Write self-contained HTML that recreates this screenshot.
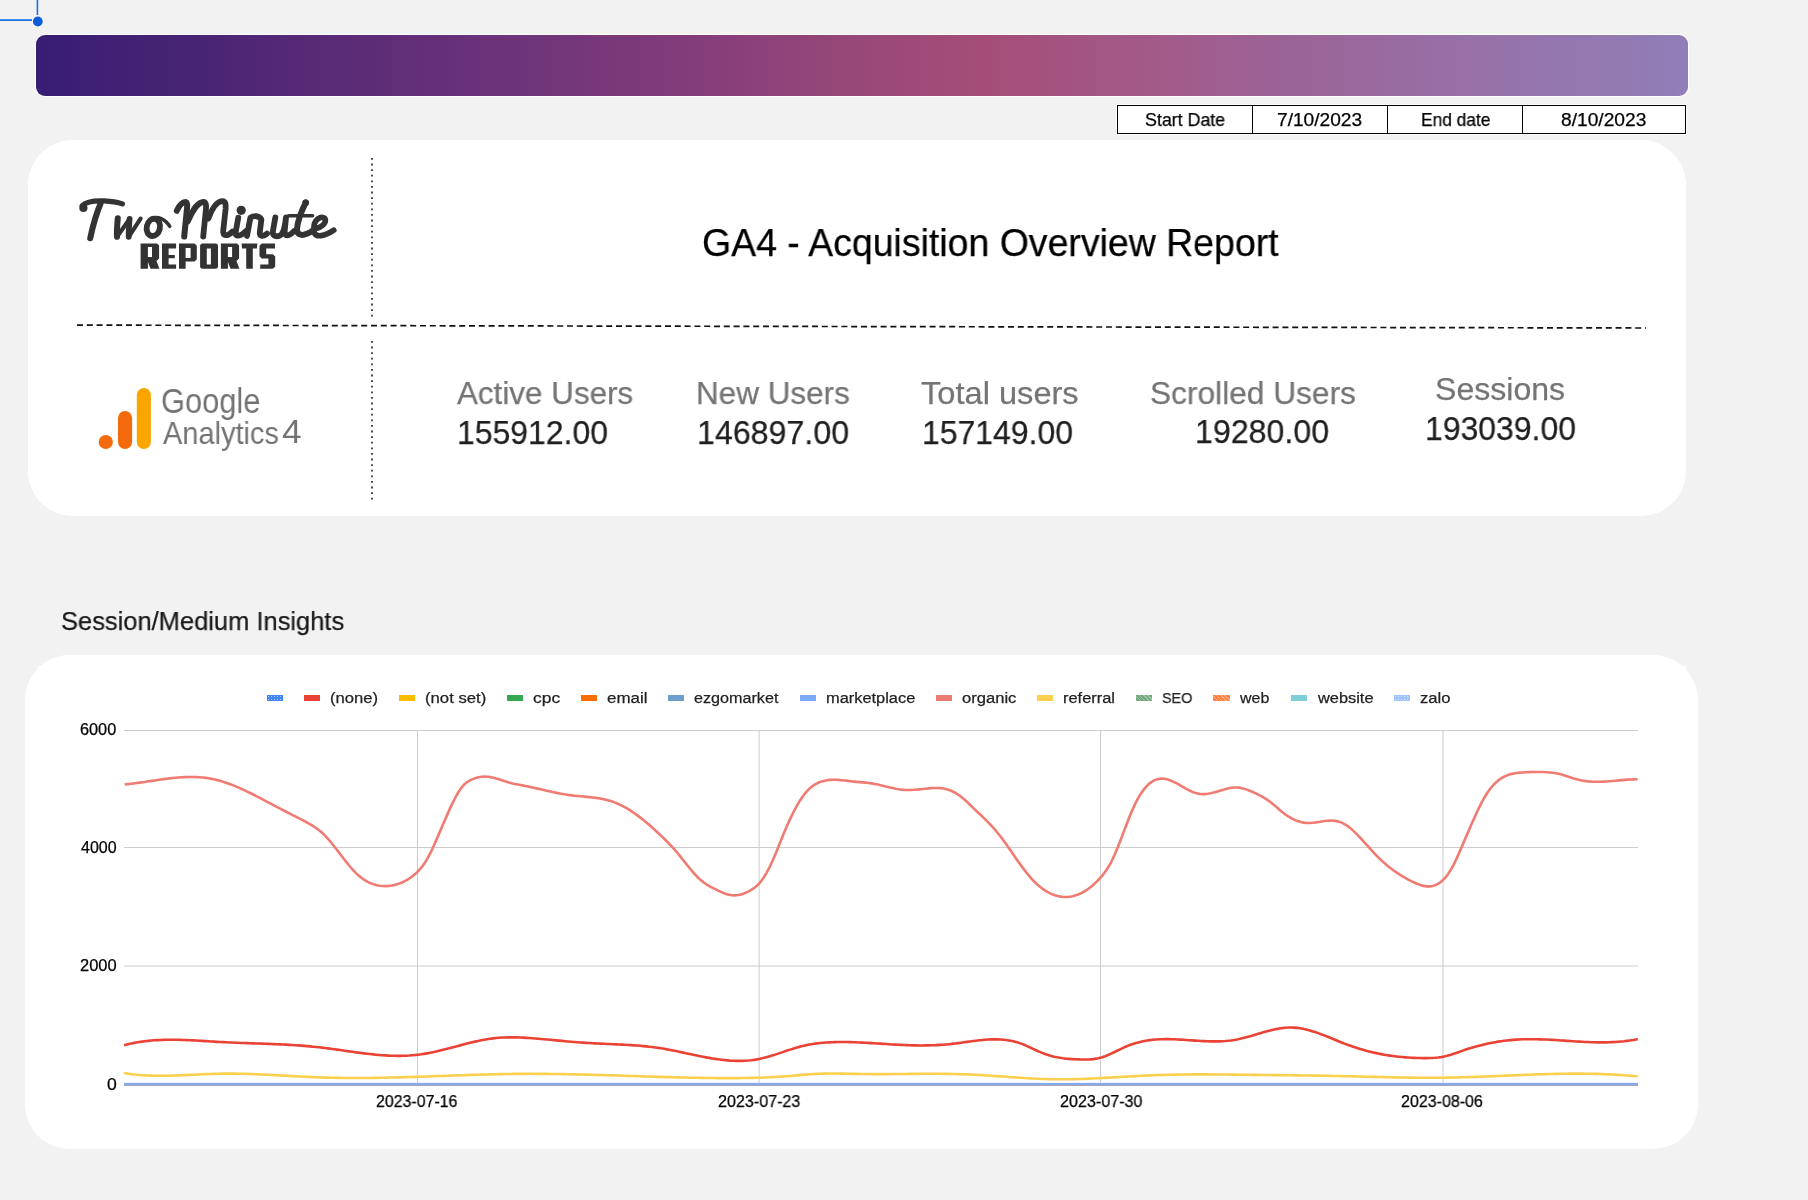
<!DOCTYPE html>
<html><head><meta charset="utf-8">
<style>
html,body{margin:0;padding:0;}
body{width:1808px;height:1200px;background:#f2f2f2;position:relative;overflow:hidden;font-family:"Liberation Sans",sans-serif;}
.abs{position:absolute;}
.t{position:absolute;white-space:pre;line-height:1;transform-origin:0 0;will-change:transform;-webkit-text-stroke:0.25px currentColor;}
.sw{position:absolute;top:695.3px;width:16.3px;height:5.5px;}
.card{position:absolute;background:#fff;border-radius:45px;}
</style></head>
<body>
<svg class="abs" style="left:0;top:0" width="60" height="40">
  <rect x="36.6" y="0" width="1.6" height="15" fill="#1a73e8"/>
  <rect x="0" y="19.2" width="32" height="1.8" fill="#1a73e8"/>
  <circle cx="37.8" cy="21.5" r="5.6" fill="#fff"/>
  <circle cx="37.8" cy="21.5" r="4.9" fill="#0b5ed7"/>
</svg>
<div class="abs" style="left:35px;top:34px;width:1654px;height:63px;border-radius:10px;background:#fff;"></div>
<div class="abs" style="left:36px;top:35px;width:1652px;height:61px;border-radius:9px;background:linear-gradient(90deg,#381d74 0%,#482474 9.6%,#5c2c77 19.3%,#6d337a 28.7%,#853d7a 40.5%,#984878 49.6%,#a54d78 57.4%,#a25a89 67.7%,#9a679b 78.9%,#9673aa 88.9%,#917eb8 100%);"></div>
<div class="abs" style="left:1116.8px;top:104.8px;width:567.5px;height:27.2px;border:1.35px solid #000;background:#fff;box-shadow:0 0 0 1px #fff;"></div>
<div class="abs" style="left:1251.6px;top:104.8px;width:1.35px;height:29.6px;background:#000"></div>
<div class="abs" style="left:1386.8px;top:104.8px;width:1.35px;height:29.6px;background:#000"></div>
<div class="abs" style="left:1521.8px;top:104.8px;width:1.35px;height:29.6px;background:#000"></div>
<div class="card" style="left:28px;top:140px;width:1658px;height:376px;"></div>
<svg class="abs" style="left:0;top:0" width="1808" height="600">
  <line x1="372" y1="158" x2="372" y2="318" stroke="#333" stroke-width="1.8" stroke-dasharray="1.8 3.8"/>
  <line x1="372" y1="341" x2="372" y2="500" stroke="#333" stroke-width="1.8" stroke-dasharray="1.8 3.8"/>
  <line x1="77" y1="325.1" x2="1646" y2="328" stroke="#111" stroke-width="1.7" stroke-dasharray="6 3.8"/>
</svg>

<svg class="abs" style="left:0;top:0" width="400" height="520">
  <g fill="#333333">
    <path fill-rule="evenodd" d="M140.6,243.4 L157,243.4 L159.1,245.5 L159.1,258.5 L156.5,261 L159.4,268.7 L150.5,268.7 L147.9,262 L147.9,268.7 L140.6,268.7 Z M147.9,247.1 L152,247.1 L152,257.1 L147.9,257.1 Z"/>
    <path d="M162,243.4 L176.1,243.4 L176.1,248.4 L168.6,248.4 L168.6,255 L174.8,255 L174.8,258.3 L168.6,258.3 L168.6,264.5 L176.1,264.5 L176.1,268.7 L162,268.7 Z"/>
    <path fill-rule="evenodd" d="M179,243.4 L194.5,243.4 L196.8,245.7 L196.8,259.3 L194.5,261.6 L185.6,261.6 L185.6,268.7 L179,268.7 Z M185.6,248 L190.6,248 L190.6,257.9 L185.6,257.9 Z"/>
    <path fill-rule="evenodd" d="M202.6,243.4 L215.5,243.4 Q218,243.4 218,245.9 L218,266.2 Q218,268.7 215.5,268.7 L202.6,268.7 Q200.1,268.7 200.1,266.2 L200.1,245.9 Q200.1,243.4 202.6,243.4 Z M206.8,248.4 L210.9,248.4 L210.9,264.5 L206.8,264.5 Z"/>
    <path fill-rule="evenodd" d="M220.9,243.4 L237,243.4 L239.1,245.5 L239.1,258.5 L236.5,261 L239.4,268.7 L230.5,268.7 L227.9,262 L227.9,268.7 L220.9,268.7 Z M227.9,247.1 L232.1,247.1 L232.1,257.1 L227.9,257.1 Z"/>
    <path d="M241.6,243.4 L257.4,243.4 L256.9,248.4 L252.8,248.4 L252.8,268.7 L246.2,268.7 L246.2,248.4 L242,248.4 Z"/>
    <path d="M261.8,243.4 L275,243.4 L275,248.4 L266.2,248.4 L266.2,254.3 L272.9,254.3 L275.2,256.6 L275.2,266.4 L272.9,268.7 L260.2,268.7 L260.2,264.5 L268.4,264.5 L268.4,258.6 L261.8,258.6 L259.5,256.3 L259.5,245.7 Z"/>
  </g>
  <g fill="none" stroke="#333333" stroke-linecap="round" stroke-linejoin="round">
    <circle cx="83.4" cy="208" r="4.1" fill="#333333" stroke="none"/>
    <path d="M82.2,205.8 C86,201.5 95,200.6 104,200.9 C112,201.3 118,202.4 122.4,203.9" stroke-width="5.2"/>
    <path d="M100.6,203.5 C97,212 93,225 90.2,238.3" stroke-width="6.0"/>
    <path d="M117.8,218.2 C117.2,225 116.6,231 117,236.8" stroke-width="6.0"/>
    <path d="M117,236.8 L129.6,219 M129.6,219 C129.1,225 128.6,231 128.7,236.8 M128.7,236.8 L140.6,218.6" stroke-width="4.2"/>
    <path d="M129.6,219 C129.1,225 128.6,231 128.7,236.8" stroke-width="5.8"/>
    <ellipse cx="153.3" cy="227.4" rx="6.6" ry="8.7" stroke-width="5.8" transform="rotate(12 153.3 227.4)"/>
    <path d="M151.5,218.6 C158,215.8 165,219 169.8,226.4" stroke-width="3.5"/>
    <path d="M176.8,210.8 C179,206 182,202 185.4,202 C187.2,202.2 187.4,205 187,208.5 L184.2,236.6" stroke-width="6.0"/>
    <path d="M187.8,221.5 C192,211 198,202.2 203.4,202 C205.8,202 206.4,205 206,209 L203.2,236.6" stroke-width="5.8"/>
    <path d="M208.4,218.5 C212,209 217,201.2 222.4,201.2 C225.4,201.4 226,204 225.6,209 L223.2,230.8 C222.8,236 227,237 232.4,231.6" stroke-width="5.8"/>
    <path d="M238.3,217.6 L235.6,232.6 C235,236.8 240,237 246,231" stroke-width="5.8"/>
    <circle cx="241.2" cy="210.3" r="4.6" fill="#333333" stroke="none"/>
    <path d="M247,236 L250.4,217.6 C253.6,215.6 259,215.4 261.4,219.4 L259.8,232.4 C259.4,236.4 263.4,237 267,233.6" stroke-width="5.8"/>
    <path d="M275.3,217.4 L272.8,231.8 C272.4,236.4 277.2,237.4 281,234.8 C283.6,232.6 285,226 286,217.4 L284.6,232 C284.2,236.4 289,237 294,231" stroke-width="5.8"/>
    <path d="M305.8,202.4 C302,210 297.6,222 297,229 C296.6,236 303.4,237 313,230.6" stroke-width="6.0"/>
    <circle cx="305.6" cy="202.8" r="3.4" fill="#333333" stroke="none"/>
    <path d="M288.8,215.7 L312.6,215.7" stroke-width="3.5"/>
    <path d="M316,228.6 C321,227.4 325.4,224 325.4,220.2 C325.4,217.2 321.2,216.6 318.2,218.6 C314.2,221.2 312.6,228 314.4,233 C316.4,237.4 324,236.6 333.8,230.2" stroke-width="5.6"/>
  </g>
  <g>
    <circle cx="105.8" cy="442" r="7.1" fill="#f36b0c"/>
    <rect x="118" y="411" width="14.1" height="38.1" rx="7" fill="#f36b0c"/>
    <rect x="136.8" y="387.9" width="14.1" height="61.2" rx="7" fill="#fba500"/>
  </g>
</svg>
<div class="card" style="left:25px;top:655px;width:1673px;height:494px;"></div>
<div class="abs" style="left:37.8px;top:665.7px;width:7px;height:7px;background:#fff"></div>
<div class="abs" style="left:1679.5px;top:665.7px;width:6.6px;height:7px;background:#fff"></div>
<svg class="abs" style="left:0;top:0" width="1808" height="1200" viewBox="0 0 1808 1200">
  <g fill="#cccccc">
    <rect x="124" y="730" width="1514" height="1"/>
    <rect x="124" y="847" width="1514" height="1"/>
    <rect x="124" y="965.5" width="1514" height="1"/>
    <rect x="417" y="730" width="1" height="354"/>
    <rect x="758.6" y="730" width="1" height="354"/>
    <rect x="1100.1" y="730" width="1" height="354"/>
    <rect x="1442.5" y="730" width="1" height="354"/>
  </g>
  <g fill="none" stroke-linejoin="round" stroke-linecap="butt">
    <path d="M124.7,784.45 L127.7,784.15 L130.7,783.82 L133.7,783.46 L136.7,783.07 L139.7,782.65 L142.7,782.22 L145.7,781.78 L148.7,781.33 L151.7,780.88 L154.7,780.43 L157.7,779.98 L160.7,779.55 L163.7,779.14 L166.7,778.75 L169.7,778.38 L172.7,778.05 L175.7,777.75 L178.7,777.50 L181.7,777.29 L184.7,777.13 L187.7,777.03 L190.7,776.99 L193.7,777.02 L196.7,777.12 L199.7,777.29 L202.7,777.55 L205.7,777.89 L208.7,778.32 L211.7,778.85 L214.7,779.47 L217.7,780.20 L220.7,781.02 L223.7,781.94 L226.7,782.93 L229.7,784.01 L232.7,785.16 L235.7,786.37 L238.7,787.65 L241.7,788.98 L244.7,790.37 L247.7,791.80 L250.7,793.27 L253.7,794.77 L256.7,796.31 L259.7,797.87 L262.7,799.44 L265.7,801.03 L268.7,802.62 L271.7,804.22 L274.7,805.81 L277.7,807.39 L280.7,808.96 L283.7,810.50 L286.7,812.03 L289.7,813.54 L292.7,815.04 L295.7,816.56 L298.7,818.09 L301.7,819.66 L304.7,821.26 L307.7,822.92 L310.7,824.64 L313.7,826.46 L316.7,828.45 L319.7,830.72 L322.7,833.34 L325.7,836.34 L328.7,839.66 L331.7,843.24 L334.7,847.01 L337.7,850.89 L340.7,854.82 L343.7,858.74 L346.7,862.56 L349.7,866.23 L352.7,869.68 L355.7,872.83 L358.7,875.63 L361.7,878.05 L364.7,880.12 L367.7,881.85 L370.7,883.27 L373.7,884.37 L376.7,885.19 L379.7,885.74 L382.7,886.04 L385.7,886.10 L388.7,885.94 L391.7,885.56 L394.7,884.95 L397.7,884.11 L400.7,883.03 L403.7,881.70 L406.7,880.13 L409.7,878.26 L412.7,876.08 L415.7,873.53 L418.7,870.59 L421.7,867.16 L424.7,863.07 L427.7,858.15 L430.7,852.38 L433.7,845.96 L436.7,839.13 L439.7,832.12 L442.7,825.11 L445.7,818.17 L448.7,811.39 L451.7,804.87 L454.7,798.75 L457.7,793.26 L460.7,788.62 L463.7,785.01 L466.7,782.37 L469.7,780.49 L472.7,779.13 L475.7,778.08 L478.7,777.29 L481.7,776.78 L484.7,776.59 L487.7,776.72 L490.7,777.15 L493.7,777.80 L496.7,778.63 L499.7,779.56 L502.7,780.55 L505.7,781.54 L508.7,782.46 L511.7,783.26 L514.7,783.94 L517.7,784.54 L520.7,785.09 L523.7,785.65 L526.7,786.24 L529.7,786.87 L532.7,787.52 L535.7,788.19 L538.7,788.87 L541.7,789.55 L544.7,790.24 L547.7,790.92 L550.7,791.59 L553.7,792.24 L556.7,792.86 L559.7,793.45 L562.7,794.00 L565.7,794.50 L568.7,794.95 L571.7,795.35 L574.7,795.69 L577.7,796.00 L580.7,796.28 L583.7,796.56 L586.7,796.84 L589.7,797.14 L592.7,797.48 L595.7,797.87 L598.7,798.32 L601.7,798.85 L604.7,799.48 L607.7,800.22 L610.7,801.08 L613.7,802.09 L616.7,803.24 L619.7,804.57 L622.7,806.05 L625.7,807.68 L628.7,809.46 L631.7,811.38 L634.7,813.43 L637.7,815.59 L640.7,817.87 L643.7,820.26 L646.7,822.74 L649.7,825.32 L652.7,827.97 L655.7,830.70 L658.7,833.50 L661.7,836.35 L664.7,839.25 L667.7,842.22 L670.7,845.31 L673.7,848.56 L676.7,852.02 L679.7,855.67 L682.7,859.44 L685.7,863.24 L688.7,866.99 L691.7,870.64 L694.7,874.08 L697.7,877.26 L700.7,880.08 L703.7,882.49 L706.7,884.52 L709.7,886.28 L712.7,887.89 L715.7,889.43 L718.7,890.91 L721.7,892.27 L724.7,893.45 L727.7,894.40 L730.7,895.07 L733.7,895.39 L736.7,895.32 L739.7,894.81 L742.7,893.93 L745.7,892.74 L748.7,891.31 L751.7,889.65 L754.7,887.62 L757.7,885.02 L760.7,881.68 L763.7,877.54 L766.7,872.61 L769.7,866.92 L772.7,860.49 L775.7,853.45 L778.7,846.05 L781.7,838.57 L784.7,831.27 L787.7,824.32 L790.7,817.77 L793.7,811.66 L796.7,806.04 L799.7,800.96 L802.7,796.45 L805.7,792.56 L808.7,789.33 L811.7,786.73 L814.7,784.67 L817.7,783.06 L820.7,781.82 L823.7,780.91 L826.7,780.28 L829.7,779.91 L832.7,779.75 L835.7,779.76 L838.7,779.92 L841.7,780.19 L844.7,780.53 L847.7,780.90 L850.7,781.27 L853.7,781.60 L856.7,781.88 L859.7,782.13 L862.7,782.37 L865.7,782.64 L868.7,782.98 L871.7,783.40 L874.7,783.94 L877.7,784.56 L880.7,785.25 L883.7,785.96 L886.7,786.69 L889.7,787.40 L892.7,788.07 L895.7,788.68 L898.7,789.19 L901.7,789.59 L904.7,789.84 L907.7,789.95 L910.7,789.93 L913.7,789.81 L916.7,789.61 L919.7,789.35 L922.7,789.04 L925.7,788.73 L928.7,788.41 L931.7,788.14 L934.7,787.97 L937.7,787.93 L940.7,788.09 L943.7,788.50 L946.7,789.19 L949.7,790.18 L952.7,791.48 L955.7,793.09 L958.7,795.01 L961.7,797.26 L964.7,799.80 L967.7,802.57 L970.7,805.45 L973.7,808.36 L976.7,811.21 L979.7,814.04 L982.7,816.89 L985.7,819.81 L988.7,822.83 L991.7,826.00 L994.7,829.36 L997.7,832.96 L1000.7,836.80 L1003.7,840.83 L1006.7,845.01 L1009.7,849.29 L1012.7,853.61 L1015.7,857.93 L1018.7,862.20 L1021.7,866.37 L1024.7,870.38 L1027.7,874.19 L1030.7,877.75 L1033.7,881.01 L1036.7,883.96 L1039.7,886.59 L1042.7,888.91 L1045.7,890.94 L1048.7,892.66 L1051.7,894.09 L1054.7,895.22 L1057.7,896.07 L1060.7,896.64 L1063.7,896.93 L1066.7,896.94 L1069.7,896.69 L1072.7,896.16 L1075.7,895.35 L1078.7,894.27 L1081.7,892.90 L1084.7,891.24 L1087.7,889.29 L1090.7,887.05 L1093.7,884.50 L1096.7,881.66 L1099.7,878.51 L1102.7,875.05 L1105.7,871.12 L1108.7,866.51 L1111.7,861.01 L1114.7,854.57 L1117.7,847.40 L1120.7,839.75 L1123.7,831.86 L1126.7,823.97 L1129.7,816.33 L1132.7,809.18 L1135.7,802.76 L1138.7,797.17 L1141.7,792.39 L1144.7,788.38 L1147.7,785.11 L1150.7,782.54 L1153.7,780.64 L1156.7,779.37 L1159.7,778.71 L1162.7,778.61 L1165.7,779.00 L1168.7,779.81 L1171.7,780.96 L1174.7,782.37 L1177.7,783.96 L1180.7,785.66 L1183.7,787.40 L1186.7,789.08 L1189.7,790.65 L1192.7,792.01 L1195.7,793.10 L1198.7,793.83 L1201.7,794.17 L1204.7,794.15 L1207.7,793.83 L1210.7,793.27 L1213.7,792.54 L1216.7,791.69 L1219.7,790.78 L1222.7,789.88 L1225.7,789.04 L1228.7,788.33 L1231.7,787.80 L1234.7,787.51 L1237.7,787.53 L1240.7,787.91 L1243.7,788.64 L1246.7,789.63 L1249.7,790.79 L1252.7,792.06 L1255.7,793.39 L1258.7,794.83 L1261.7,796.41 L1264.7,798.16 L1267.7,800.10 L1270.7,802.27 L1273.7,804.69 L1276.7,807.28 L1279.7,809.91 L1282.7,812.43 L1285.7,814.73 L1288.7,816.74 L1291.7,818.48 L1294.7,819.94 L1297.7,821.12 L1300.7,822.01 L1303.7,822.61 L1306.7,822.93 L1309.7,822.96 L1312.7,822.77 L1315.7,822.41 L1318.7,821.97 L1321.7,821.50 L1324.7,821.07 L1327.7,820.76 L1330.7,820.61 L1333.7,820.71 L1336.7,821.12 L1339.7,821.90 L1342.7,823.12 L1345.7,824.80 L1348.7,826.90 L1351.7,829.35 L1354.7,832.09 L1357.7,835.07 L1360.7,838.23 L1363.7,841.52 L1366.7,844.87 L1369.7,848.23 L1372.7,851.54 L1375.7,854.75 L1378.7,857.79 L1381.7,860.66 L1384.7,863.36 L1387.7,865.90 L1390.7,868.29 L1393.7,870.53 L1396.7,872.63 L1399.7,874.60 L1402.7,876.45 L1405.7,878.19 L1408.7,879.82 L1411.7,881.35 L1414.7,882.78 L1417.7,884.06 L1420.7,885.12 L1423.7,885.90 L1426.7,886.34 L1429.7,886.38 L1432.7,885.95 L1435.7,885.00 L1438.7,883.45 L1441.7,881.24 L1444.7,878.32 L1447.7,874.62 L1450.7,870.07 L1453.7,864.62 L1456.7,858.37 L1459.7,851.60 L1462.7,844.62 L1465.7,837.63 L1468.7,830.69 L1471.7,823.83 L1474.7,817.10 L1477.7,810.58 L1480.7,804.41 L1483.7,798.75 L1486.7,793.75 L1489.7,789.43 L1492.7,785.75 L1495.7,782.66 L1498.7,780.09 L1501.7,778.01 L1504.7,776.36 L1507.7,775.08 L1510.7,774.12 L1513.7,773.43 L1516.7,772.95 L1519.7,772.64 L1522.7,772.44 L1525.7,772.30 L1528.7,772.17 L1531.7,772.06 L1534.7,771.98 L1537.7,771.94 L1540.7,771.95 L1543.7,772.02 L1546.7,772.18 L1549.7,772.43 L1552.7,772.78 L1555.7,773.25 L1558.7,773.85 L1561.7,774.59 L1564.7,775.47 L1567.7,776.43 L1570.7,777.42 L1573.7,778.39 L1576.7,779.28 L1579.7,780.04 L1582.7,780.65 L1585.7,781.11 L1588.7,781.45 L1591.7,781.67 L1594.7,781.78 L1597.7,781.80 L1600.7,781.74 L1603.7,781.61 L1606.7,781.43 L1609.7,781.21 L1612.7,780.95 L1615.7,780.68 L1618.7,780.40 L1621.7,780.13 L1624.7,779.88 L1627.7,779.66 L1630.7,779.48 L1633.7,779.36 L1636.7,779.32 L1637.6,779.32" stroke="#f07b72" stroke-width="2.6"/>
    <path d="M124.0,1073.09 L127.0,1073.57 L130.0,1073.99 L133.0,1074.36 L136.0,1074.68 L139.0,1074.95 L142.0,1075.19 L145.0,1075.38 L148.0,1075.53 L151.0,1075.64 L154.0,1075.72 L157.0,1075.77 L160.0,1075.79 L163.0,1075.78 L166.0,1075.75 L169.0,1075.69 L172.0,1075.62 L175.0,1075.52 L178.0,1075.42 L181.0,1075.30 L184.0,1075.17 L187.0,1075.03 L190.0,1074.89 L193.0,1074.74 L196.0,1074.59 L199.0,1074.45 L202.0,1074.31 L205.0,1074.17 L208.0,1074.05 L211.0,1073.93 L214.0,1073.83 L217.0,1073.75 L220.0,1073.68 L223.0,1073.64 L226.0,1073.61 L229.0,1073.60 L232.0,1073.61 L235.0,1073.64 L238.0,1073.68 L241.0,1073.74 L244.0,1073.81 L247.0,1073.90 L250.0,1073.99 L253.0,1074.10 L256.0,1074.22 L259.0,1074.35 L262.0,1074.48 L265.0,1074.62 L268.0,1074.77 L271.0,1074.93 L274.0,1075.09 L277.0,1075.25 L280.0,1075.41 L283.0,1075.58 L286.0,1075.75 L289.0,1075.92 L292.0,1076.08 L295.0,1076.25 L298.0,1076.41 L301.0,1076.57 L304.0,1076.72 L307.0,1076.87 L310.0,1077.01 L313.0,1077.14 L316.0,1077.27 L319.0,1077.38 L322.0,1077.48 L325.0,1077.58 L328.0,1077.66 L331.0,1077.74 L334.0,1077.80 L337.0,1077.86 L340.0,1077.90 L343.0,1077.94 L346.0,1077.97 L349.0,1077.99 L352.0,1078.00 L355.0,1078.01 L358.0,1078.01 L361.0,1078.00 L364.0,1077.98 L367.0,1077.96 L370.0,1077.93 L373.0,1077.89 L376.0,1077.85 L379.0,1077.80 L382.0,1077.75 L385.0,1077.69 L388.0,1077.63 L391.0,1077.56 L394.0,1077.49 L397.0,1077.41 L400.0,1077.33 L403.0,1077.25 L406.0,1077.16 L409.0,1077.07 L412.0,1076.98 L415.0,1076.88 L418.0,1076.78 L421.0,1076.68 L424.0,1076.58 L427.0,1076.48 L430.0,1076.37 L433.0,1076.27 L436.0,1076.16 L439.0,1076.05 L442.0,1075.94 L445.0,1075.84 L448.0,1075.73 L451.0,1075.62 L454.0,1075.52 L457.0,1075.41 L460.0,1075.31 L463.0,1075.20 L466.0,1075.10 L469.0,1075.00 L472.0,1074.90 L475.0,1074.81 L478.0,1074.72 L481.0,1074.63 L484.0,1074.54 L487.0,1074.46 L490.0,1074.38 L493.0,1074.31 L496.0,1074.24 L499.0,1074.17 L502.0,1074.11 L505.0,1074.06 L508.0,1074.01 L511.0,1073.96 L514.0,1073.92 L517.0,1073.89 L520.0,1073.86 L523.0,1073.84 L526.0,1073.83 L529.0,1073.82 L532.0,1073.82 L535.0,1073.83 L538.0,1073.83 L541.0,1073.85 L544.0,1073.87 L547.0,1073.90 L550.0,1073.93 L553.0,1073.96 L556.0,1074.00 L559.0,1074.05 L562.0,1074.09 L565.0,1074.15 L568.0,1074.20 L571.0,1074.26 L574.0,1074.33 L577.0,1074.39 L580.0,1074.46 L583.0,1074.54 L586.0,1074.61 L589.0,1074.69 L592.0,1074.77 L595.0,1074.86 L598.0,1074.94 L601.0,1075.03 L604.0,1075.12 L607.0,1075.21 L610.0,1075.30 L613.0,1075.40 L616.0,1075.49 L619.0,1075.59 L622.0,1075.68 L625.0,1075.78 L628.0,1075.88 L631.0,1075.97 L634.0,1076.07 L637.0,1076.17 L640.0,1076.26 L643.0,1076.36 L646.0,1076.46 L649.0,1076.55 L652.0,1076.64 L655.0,1076.74 L658.0,1076.83 L661.0,1076.92 L664.0,1077.01 L667.0,1077.09 L670.0,1077.17 L673.0,1077.26 L676.0,1077.34 L679.0,1077.41 L682.0,1077.48 L685.0,1077.56 L688.0,1077.62 L691.0,1077.69 L694.0,1077.75 L697.0,1077.80 L700.0,1077.86 L703.0,1077.91 L706.0,1077.95 L709.0,1077.99 L712.0,1078.03 L715.0,1078.06 L718.0,1078.08 L721.0,1078.11 L724.0,1078.12 L727.0,1078.13 L730.0,1078.13 L733.0,1078.13 L736.0,1078.12 L739.0,1078.10 L742.0,1078.07 L745.0,1078.03 L748.0,1077.98 L751.0,1077.92 L754.0,1077.85 L757.0,1077.77 L760.0,1077.68 L763.0,1077.57 L766.0,1077.45 L769.0,1077.32 L772.0,1077.17 L775.0,1077.00 L778.0,1076.82 L781.0,1076.63 L784.0,1076.41 L787.0,1076.18 L790.0,1075.93 L793.0,1075.68 L796.0,1075.41 L799.0,1075.15 L802.0,1074.88 L805.0,1074.63 L808.0,1074.40 L811.0,1074.19 L814.0,1074.00 L817.0,1073.84 L820.0,1073.72 L823.0,1073.64 L826.0,1073.58 L829.0,1073.54 L832.0,1073.53 L835.0,1073.54 L838.0,1073.57 L841.0,1073.61 L844.0,1073.66 L847.0,1073.71 L850.0,1073.78 L853.0,1073.84 L856.0,1073.90 L859.0,1073.96 L862.0,1074.00 L865.0,1074.04 L868.0,1074.07 L871.0,1074.09 L874.0,1074.11 L877.0,1074.11 L880.0,1074.11 L883.0,1074.11 L886.0,1074.09 L889.0,1074.08 L892.0,1074.06 L895.0,1074.04 L898.0,1074.01 L901.0,1073.99 L904.0,1073.96 L907.0,1073.93 L910.0,1073.91 L913.0,1073.88 L916.0,1073.86 L919.0,1073.84 L922.0,1073.82 L925.0,1073.80 L928.0,1073.79 L931.0,1073.79 L934.0,1073.79 L937.0,1073.80 L940.0,1073.81 L943.0,1073.84 L946.0,1073.87 L949.0,1073.91 L952.0,1073.96 L955.0,1074.03 L958.0,1074.10 L961.0,1074.19 L964.0,1074.28 L967.0,1074.40 L970.0,1074.52 L973.0,1074.66 L976.0,1074.82 L979.0,1074.98 L982.0,1075.16 L985.0,1075.34 L988.0,1075.53 L991.0,1075.73 L994.0,1075.94 L997.0,1076.15 L1000.0,1076.36 L1003.0,1076.57 L1006.0,1076.78 L1009.0,1077.00 L1012.0,1077.21 L1015.0,1077.42 L1018.0,1077.62 L1021.0,1077.82 L1024.0,1078.01 L1027.0,1078.19 L1030.0,1078.36 L1033.0,1078.53 L1036.0,1078.68 L1039.0,1078.81 L1042.0,1078.94 L1045.0,1079.04 L1048.0,1079.13 L1051.0,1079.21 L1054.0,1079.26 L1057.0,1079.29 L1060.0,1079.31 L1063.0,1079.30 L1066.0,1079.28 L1069.0,1079.24 L1072.0,1079.19 L1075.0,1079.12 L1078.0,1079.04 L1081.0,1078.94 L1084.0,1078.84 L1087.0,1078.72 L1090.0,1078.59 L1093.0,1078.46 L1096.0,1078.31 L1099.0,1078.16 L1102.0,1078.00 L1105.0,1077.84 L1108.0,1077.67 L1111.0,1077.50 L1114.0,1077.33 L1117.0,1077.15 L1120.0,1076.97 L1123.0,1076.80 L1126.0,1076.62 L1129.0,1076.45 L1132.0,1076.28 L1135.0,1076.11 L1138.0,1075.95 L1141.0,1075.79 L1144.0,1075.64 L1147.0,1075.50 L1150.0,1075.37 L1153.0,1075.24 L1156.0,1075.13 L1159.0,1075.02 L1162.0,1074.93 L1165.0,1074.84 L1168.0,1074.76 L1171.0,1074.69 L1174.0,1074.63 L1177.0,1074.58 L1180.0,1074.53 L1183.0,1074.49 L1186.0,1074.46 L1189.0,1074.44 L1192.0,1074.42 L1195.0,1074.41 L1198.0,1074.40 L1201.0,1074.40 L1204.0,1074.40 L1207.0,1074.41 L1210.0,1074.42 L1213.0,1074.43 L1216.0,1074.45 L1219.0,1074.47 L1222.0,1074.50 L1225.0,1074.53 L1228.0,1074.56 L1231.0,1074.59 L1234.0,1074.62 L1237.0,1074.66 L1240.0,1074.69 L1243.0,1074.73 L1246.0,1074.77 L1249.0,1074.80 L1252.0,1074.84 L1255.0,1074.88 L1258.0,1074.91 L1261.0,1074.95 L1264.0,1074.98 L1267.0,1075.02 L1270.0,1075.05 L1273.0,1075.09 L1276.0,1075.12 L1279.0,1075.16 L1282.0,1075.19 L1285.0,1075.23 L1288.0,1075.26 L1291.0,1075.30 L1294.0,1075.34 L1297.0,1075.37 L1300.0,1075.41 L1303.0,1075.45 L1306.0,1075.49 L1309.0,1075.54 L1312.0,1075.58 L1315.0,1075.62 L1318.0,1075.67 L1321.0,1075.72 L1324.0,1075.77 L1327.0,1075.82 L1330.0,1075.87 L1333.0,1075.93 L1336.0,1075.99 L1339.0,1076.04 L1342.0,1076.11 L1345.0,1076.17 L1348.0,1076.24 L1351.0,1076.31 L1354.0,1076.38 L1357.0,1076.45 L1360.0,1076.53 L1363.0,1076.60 L1366.0,1076.68 L1369.0,1076.76 L1372.0,1076.83 L1375.0,1076.91 L1378.0,1076.98 L1381.0,1077.06 L1384.0,1077.13 L1387.0,1077.20 L1390.0,1077.27 L1393.0,1077.34 L1396.0,1077.40 L1399.0,1077.46 L1402.0,1077.51 L1405.0,1077.57 L1408.0,1077.61 L1411.0,1077.65 L1414.0,1077.69 L1417.0,1077.72 L1420.0,1077.75 L1423.0,1077.77 L1426.0,1077.78 L1429.0,1077.79 L1432.0,1077.79 L1435.0,1077.78 L1438.0,1077.76 L1441.0,1077.74 L1444.0,1077.70 L1447.0,1077.66 L1450.0,1077.61 L1453.0,1077.55 L1456.0,1077.48 L1459.0,1077.40 L1462.0,1077.32 L1465.0,1077.24 L1468.0,1077.14 L1471.0,1077.04 L1474.0,1076.94 L1477.0,1076.83 L1480.0,1076.72 L1483.0,1076.60 L1486.0,1076.49 L1489.0,1076.36 L1492.0,1076.24 L1495.0,1076.11 L1498.0,1075.99 L1501.0,1075.86 L1504.0,1075.73 L1507.0,1075.60 L1510.0,1075.47 L1513.0,1075.35 L1516.0,1075.22 L1519.0,1075.09 L1522.0,1074.97 L1525.0,1074.85 L1528.0,1074.74 L1531.0,1074.62 L1534.0,1074.51 L1537.0,1074.41 L1540.0,1074.31 L1543.0,1074.21 L1546.0,1074.12 L1549.0,1074.04 L1552.0,1073.96 L1555.0,1073.89 L1558.0,1073.83 L1561.0,1073.78 L1564.0,1073.73 L1567.0,1073.69 L1570.0,1073.67 L1573.0,1073.65 L1576.0,1073.64 L1579.0,1073.64 L1582.0,1073.66 L1585.0,1073.68 L1588.0,1073.72 L1591.0,1073.77 L1594.0,1073.83 L1597.0,1073.90 L1600.0,1073.99 L1603.0,1074.10 L1606.0,1074.21 L1609.0,1074.35 L1612.0,1074.49 L1615.0,1074.66 L1618.0,1074.84 L1621.0,1075.03 L1624.0,1075.25 L1627.0,1075.48 L1630.0,1075.73 L1633.0,1076.00 L1636.0,1076.29 L1637.8,1076.47" stroke="#fcd04f" stroke-width="2.6"/>
    <path d="M124.1,1045.29 L127.1,1044.51 L130.1,1043.80 L133.1,1043.15 L136.1,1042.57 L139.1,1042.06 L142.1,1041.60 L145.1,1041.20 L148.1,1040.85 L151.1,1040.56 L154.1,1040.31 L157.1,1040.12 L160.1,1039.96 L163.1,1039.85 L166.1,1039.77 L169.1,1039.73 L172.1,1039.73 L175.1,1039.75 L178.1,1039.81 L181.1,1039.88 L184.1,1039.98 L187.1,1040.11 L190.1,1040.24 L193.1,1040.40 L196.1,1040.56 L199.1,1040.74 L202.1,1040.92 L205.1,1041.10 L208.1,1041.29 L211.1,1041.48 L214.1,1041.66 L217.1,1041.84 L220.1,1042.00 L223.1,1042.16 L226.1,1042.31 L229.1,1042.45 L232.1,1042.57 L235.1,1042.70 L238.1,1042.81 L241.1,1042.93 L244.1,1043.03 L247.1,1043.14 L250.1,1043.24 L253.1,1043.34 L256.1,1043.44 L259.1,1043.54 L262.1,1043.65 L265.1,1043.75 L268.1,1043.86 L271.1,1043.98 L274.1,1044.10 L277.1,1044.23 L280.1,1044.36 L283.1,1044.51 L286.1,1044.66 L289.1,1044.83 L292.1,1045.01 L295.1,1045.20 L298.1,1045.40 L301.1,1045.62 L304.1,1045.86 L307.1,1046.11 L310.1,1046.38 L313.1,1046.67 L316.1,1046.97 L319.1,1047.30 L322.1,1047.65 L325.1,1048.02 L328.1,1048.41 L331.1,1048.81 L334.1,1049.22 L337.1,1049.64 L340.1,1050.06 L343.1,1050.49 L346.1,1050.92 L349.1,1051.35 L352.1,1051.78 L355.1,1052.19 L358.1,1052.60 L361.1,1053.00 L364.1,1053.38 L367.1,1053.74 L370.1,1054.08 L373.1,1054.40 L376.1,1054.70 L379.1,1054.97 L382.1,1055.20 L385.1,1055.41 L388.1,1055.58 L391.1,1055.71 L394.1,1055.79 L397.1,1055.84 L400.1,1055.84 L403.1,1055.79 L406.1,1055.69 L409.1,1055.54 L412.1,1055.32 L415.1,1055.05 L418.1,1054.72 L421.1,1054.33 L424.1,1053.87 L427.1,1053.35 L430.1,1052.77 L433.1,1052.16 L436.1,1051.49 L439.1,1050.80 L442.1,1050.07 L445.1,1049.32 L448.1,1048.54 L451.1,1047.76 L454.1,1046.96 L457.1,1046.16 L460.1,1045.37 L463.1,1044.58 L466.1,1043.81 L469.1,1043.05 L472.1,1042.32 L475.1,1041.62 L478.1,1040.96 L481.1,1040.33 L484.1,1039.76 L487.1,1039.23 L490.1,1038.77 L493.1,1038.37 L496.1,1038.03 L499.1,1037.77 L502.1,1037.57 L505.1,1037.44 L508.1,1037.36 L511.1,1037.33 L514.1,1037.35 L517.1,1037.42 L520.1,1037.52 L523.1,1037.66 L526.1,1037.83 L529.1,1038.02 L532.1,1038.24 L535.1,1038.47 L538.1,1038.72 L541.1,1038.97 L544.1,1039.24 L547.1,1039.51 L550.1,1039.78 L553.1,1040.06 L556.1,1040.34 L559.1,1040.62 L562.1,1040.90 L565.1,1041.18 L568.1,1041.45 L571.1,1041.71 L574.1,1041.96 L577.1,1042.21 L580.1,1042.44 L583.1,1042.66 L586.1,1042.86 L589.1,1043.05 L592.1,1043.22 L595.1,1043.38 L598.1,1043.53 L601.1,1043.67 L604.1,1043.80 L607.1,1043.94 L610.1,1044.07 L613.1,1044.20 L616.1,1044.34 L619.1,1044.48 L622.1,1044.63 L625.1,1044.79 L628.1,1044.96 L631.1,1045.15 L634.1,1045.35 L637.1,1045.57 L640.1,1045.82 L643.1,1046.09 L646.1,1046.38 L649.1,1046.71 L652.1,1047.06 L655.1,1047.44 L658.1,1047.87 L661.1,1048.32 L664.1,1048.82 L667.1,1049.35 L670.1,1049.91 L673.1,1050.50 L676.1,1051.10 L679.1,1051.72 L682.1,1052.36 L685.1,1053.00 L688.1,1053.65 L691.1,1054.29 L694.1,1054.93 L697.1,1055.56 L700.1,1056.18 L703.1,1056.78 L706.1,1057.35 L709.1,1057.90 L712.1,1058.41 L715.1,1058.89 L718.1,1059.33 L721.1,1059.72 L724.1,1060.07 L727.1,1060.36 L730.1,1060.60 L733.1,1060.77 L736.1,1060.87 L739.1,1060.90 L742.1,1060.86 L745.1,1060.74 L748.1,1060.54 L751.1,1060.24 L754.1,1059.85 L757.1,1059.37 L760.1,1058.78 L763.1,1058.10 L766.1,1057.32 L769.1,1056.48 L772.1,1055.57 L775.1,1054.62 L778.1,1053.63 L781.1,1052.63 L784.1,1051.61 L787.1,1050.60 L790.1,1049.61 L793.1,1048.65 L796.1,1047.74 L799.1,1046.88 L802.1,1046.10 L805.1,1045.39 L808.1,1044.78 L811.1,1044.24 L814.1,1043.77 L817.1,1043.38 L820.1,1043.04 L823.1,1042.76 L826.1,1042.54 L829.1,1042.36 L832.1,1042.22 L835.1,1042.12 L838.1,1042.06 L841.1,1042.03 L844.1,1042.03 L847.1,1042.06 L850.1,1042.12 L853.1,1042.21 L856.1,1042.32 L859.1,1042.44 L862.1,1042.59 L865.1,1042.75 L868.1,1042.92 L871.1,1043.10 L874.1,1043.29 L877.1,1043.48 L880.1,1043.67 L883.1,1043.87 L886.1,1044.06 L889.1,1044.25 L892.1,1044.43 L895.1,1044.61 L898.1,1044.77 L901.1,1044.91 L904.1,1045.04 L907.1,1045.16 L910.1,1045.26 L913.1,1045.34 L916.1,1045.39 L919.1,1045.43 L922.1,1045.44 L925.1,1045.42 L928.1,1045.38 L931.1,1045.31 L934.1,1045.21 L937.1,1045.08 L940.1,1044.91 L943.1,1044.71 L946.1,1044.48 L949.1,1044.21 L952.1,1043.89 L955.1,1043.54 L958.1,1043.16 L961.1,1042.75 L964.1,1042.33 L967.1,1041.90 L970.1,1041.48 L973.1,1041.07 L976.1,1040.68 L979.1,1040.33 L982.1,1040.01 L985.1,1039.74 L988.1,1039.53 L991.1,1039.39 L994.1,1039.32 L997.1,1039.34 L1000.1,1039.46 L1003.1,1039.67 L1006.1,1040.00 L1009.1,1040.45 L1012.1,1041.03 L1015.1,1041.75 L1018.1,1042.62 L1021.1,1043.64 L1024.1,1044.82 L1027.1,1046.10 L1030.1,1047.46 L1033.1,1048.85 L1036.1,1050.24 L1039.1,1051.59 L1042.1,1052.86 L1045.1,1054.02 L1048.1,1055.04 L1051.1,1055.91 L1054.1,1056.66 L1057.1,1057.29 L1060.1,1057.81 L1063.1,1058.25 L1066.1,1058.60 L1069.1,1058.87 L1072.1,1059.09 L1075.1,1059.26 L1078.1,1059.39 L1081.1,1059.49 L1084.1,1059.54 L1087.1,1059.50 L1090.1,1059.36 L1093.1,1059.09 L1096.1,1058.66 L1099.1,1058.04 L1102.1,1057.21 L1105.1,1056.17 L1108.1,1054.97 L1111.1,1053.65 L1114.1,1052.24 L1117.1,1050.79 L1120.1,1049.33 L1123.1,1047.91 L1126.1,1046.56 L1129.1,1045.33 L1132.1,1044.23 L1135.1,1043.25 L1138.1,1042.41 L1141.1,1041.67 L1144.1,1041.05 L1147.1,1040.52 L1150.1,1040.09 L1153.1,1039.75 L1156.1,1039.50 L1159.1,1039.31 L1162.1,1039.20 L1165.1,1039.15 L1168.1,1039.15 L1171.1,1039.21 L1174.1,1039.30 L1177.1,1039.44 L1180.1,1039.60 L1183.1,1039.78 L1186.1,1039.98 L1189.1,1040.19 L1192.1,1040.40 L1195.1,1040.61 L1198.1,1040.81 L1201.1,1040.99 L1204.1,1041.15 L1207.1,1041.28 L1210.1,1041.37 L1213.1,1041.42 L1216.1,1041.41 L1219.1,1041.35 L1222.1,1041.23 L1225.1,1041.04 L1228.1,1040.77 L1231.1,1040.42 L1234.1,1039.98 L1237.1,1039.44 L1240.1,1038.81 L1243.1,1038.10 L1246.1,1037.33 L1249.1,1036.50 L1252.1,1035.64 L1255.1,1034.76 L1258.1,1033.86 L1261.1,1032.98 L1264.1,1032.11 L1267.1,1031.28 L1270.1,1030.49 L1273.1,1029.77 L1276.1,1029.12 L1279.1,1028.56 L1282.1,1028.11 L1285.1,1027.78 L1288.1,1027.57 L1291.1,1027.52 L1294.1,1027.62 L1297.1,1027.89 L1300.1,1028.29 L1303.1,1028.84 L1306.1,1029.50 L1309.1,1030.27 L1312.1,1031.15 L1315.1,1032.10 L1318.1,1033.14 L1321.1,1034.23 L1324.1,1035.38 L1327.1,1036.57 L1330.1,1037.78 L1333.1,1039.01 L1336.1,1040.24 L1339.1,1041.46 L1342.1,1042.67 L1345.1,1043.84 L1348.1,1044.96 L1351.1,1046.04 L1354.1,1047.06 L1357.1,1048.04 L1360.1,1048.96 L1363.1,1049.84 L1366.1,1050.67 L1369.1,1051.45 L1372.1,1052.18 L1375.1,1052.87 L1378.1,1053.51 L1381.1,1054.11 L1384.1,1054.66 L1387.1,1055.17 L1390.1,1055.64 L1393.1,1056.06 L1396.1,1056.44 L1399.1,1056.78 L1402.1,1057.08 L1405.1,1057.34 L1408.1,1057.56 L1411.1,1057.74 L1414.1,1057.88 L1417.1,1057.98 L1420.1,1058.05 L1423.1,1058.08 L1426.1,1058.08 L1429.1,1058.04 L1432.1,1057.96 L1435.1,1057.79 L1438.1,1057.53 L1441.1,1057.13 L1444.1,1056.58 L1447.1,1055.86 L1450.1,1055.00 L1453.1,1054.04 L1456.1,1053.01 L1459.1,1051.95 L1462.1,1050.88 L1465.1,1049.84 L1468.1,1048.85 L1471.1,1047.91 L1474.1,1047.02 L1477.1,1046.18 L1480.1,1045.39 L1483.1,1044.65 L1486.1,1043.95 L1489.1,1043.31 L1492.1,1042.71 L1495.1,1042.16 L1498.1,1041.65 L1501.1,1041.20 L1504.1,1040.79 L1507.1,1040.43 L1510.1,1040.11 L1513.1,1039.85 L1516.1,1039.63 L1519.1,1039.45 L1522.1,1039.32 L1525.1,1039.23 L1528.1,1039.19 L1531.1,1039.18 L1534.1,1039.20 L1537.1,1039.25 L1540.1,1039.33 L1543.1,1039.44 L1546.1,1039.57 L1549.1,1039.71 L1552.1,1039.88 L1555.1,1040.05 L1558.1,1040.24 L1561.1,1040.44 L1564.1,1040.64 L1567.1,1040.84 L1570.1,1041.04 L1573.1,1041.24 L1576.1,1041.43 L1579.1,1041.61 L1582.1,1041.78 L1585.1,1041.93 L1588.1,1042.07 L1591.1,1042.18 L1594.1,1042.27 L1597.1,1042.33 L1600.1,1042.37 L1603.1,1042.37 L1606.1,1042.34 L1609.1,1042.26 L1612.1,1042.15 L1615.1,1041.99 L1618.1,1041.79 L1621.1,1041.53 L1624.1,1041.23 L1627.1,1040.86 L1630.1,1040.44 L1633.1,1039.96 L1636.1,1039.41 L1637.8,1039.08" stroke="#ea4335" stroke-width="2.6"/>
    <rect x="124" y="1084.3" width="1514" height="1.5" fill="#8f8fa6" stroke="none"/>
    <rect x="124" y="1082.9" width="1514" height="1.8" fill="#7baaf7" stroke="none"/>
  </g>
</svg>
<div class="t" style="left:1145.11px;top:111.54px;font-size:17.9px;color:#000;transform:scaleX(0.9949)">Start Date</div>
<div class="t" style="left:1277.33px;top:111.54px;font-size:17.9px;color:#000;transform:scaleX(1.0692)">7/10/2023</div>
<div class="t" style="left:1420.83px;top:111.54px;font-size:17.9px;color:#000;transform:scaleX(0.9686)">End date</div>
<div class="t" style="left:1561.43px;top:111.54px;font-size:17.9px;color:#000;transform:scaleX(1.0718)">8/10/2023</div>
<div class="t" style="left:701.86px;top:224.26px;font-size:38.55px;color:#000;transform:scaleX(0.9716)">GA4 - Acquisition Overview Report</div>
<div class="t" style="left:456.90px;top:376.61px;font-size:32px;color:#757575;transform:scaleX(0.9810)">Active Users</div>
<div class="t" style="left:456.88px;top:415.79px;font-size:33.2px;color:#1f1f1f;transform:scaleX(0.9623)">155912.00</div>
<div class="t" style="left:695.85px;top:376.61px;font-size:32px;color:#757575;transform:scaleX(0.9830)">New Users</div>
<div class="t" style="left:696.86px;top:415.79px;font-size:33.2px;color:#1f1f1f;transform:scaleX(0.9695)">146897.00</div>
<div class="t" style="left:921.18px;top:376.61px;font-size:32px;color:#757575;transform:scaleX(1.0190)">Total users</div>
<div class="t" style="left:921.88px;top:415.79px;font-size:33.2px;color:#1f1f1f;transform:scaleX(0.9623)">157149.00</div>
<div class="t" style="left:1150.12px;top:376.61px;font-size:32px;color:#757575;transform:scaleX(0.9898)">Scrolled Users</div>
<div class="t" style="left:1195.26px;top:415.39px;font-size:33.2px;color:#1f1f1f;transform:scaleX(0.9689)">19280.00</div>
<div class="t" style="left:1434.80px;top:372.61px;font-size:32px;color:#757575;transform:scaleX(1.0016)">Sessions</div>
<div class="t" style="left:1424.88px;top:411.69px;font-size:33.2px;color:#1f1f1f;transform:scaleX(0.9623)">193039.00</div>
<div class="t" style="left:161.22px;top:383.97px;font-size:34.64px;color:#737373;-webkit-text-stroke:0;transform:scaleX(0.8898)">Google</div>
<div class="t" style="left:162.80px;top:418.22px;font-size:30.45px;color:#737373;-webkit-text-stroke:0;transform:scaleX(0.9521)">Analytics</div>
<div class="t" style="left:281.76px;top:415.38px;font-size:33.8px;color:#737373;-webkit-text-stroke:0;transform:scaleX(1.0412)">4</div>
<div class="t" style="left:60.73px;top:608.13px;font-size:26.3px;color:#1a1a1a;transform:scaleX(0.9687)">Session/Medium Insights</div>
<div class="t" style="left:79.98px;top:722.35px;font-size:16px;color:#000;transform:scaleX(1.0176)">6000</div>
<div class="t" style="left:80.60px;top:840.45px;font-size:16px;color:#000;transform:scaleX(1.0000)">4000</div>
<div class="t" style="left:79.57px;top:958.45px;font-size:16px;color:#000;transform:scaleX(1.0294)">2000</div>
<div class="t" style="left:106.90px;top:1077.35px;font-size:16px;color:#000;transform:scaleX(1.1000)">0</div>
<div class="t" style="left:376.32px;top:1092.58px;font-size:16.2px;color:#000;transform:scaleX(0.9827)">2023-07-16</div>
<div class="t" style="left:717.61px;top:1092.58px;font-size:16.2px;color:#000;transform:scaleX(0.9938)">2023-07-23</div>
<div class="t" style="left:1059.60px;top:1092.58px;font-size:16.2px;color:#000;transform:scaleX(0.9951)">2023-07-30</div>
<div class="t" style="left:1401.21px;top:1092.58px;font-size:16.2px;color:#000;transform:scaleX(0.9889)">2023-08-06</div>
<div class="sw" style="left:267.1px;background:#4285f4;background-image:radial-gradient(rgba(255,255,255,.55) 0.6px,transparent 0.9px);background-size:3px 3px"></div>
<div class="sw" style="left:304.2px;background:#ea4335"></div>
<div class="t" style="left:330.13px;top:689.68px;font-size:15.5px;color:#222;transform:scaleX(1.0721)">(none)</div>
<div class="sw" style="left:398.7px;background:#fbbc04"></div>
<div class="t" style="left:424.82px;top:689.68px;font-size:15.5px;color:#222;transform:scaleX(1.0782)">(not set)</div>
<div class="sw" style="left:506.7px;background:#34a853"></div>
<div class="t" style="left:532.77px;top:689.68px;font-size:15.5px;color:#222;transform:scaleX(1.1273)">cpc</div>
<div class="sw" style="left:580.8px;background:#ff6d01"></div>
<div class="t" style="left:606.71px;top:689.68px;font-size:15.5px;color:#222;transform:scaleX(1.0914)">email</div>
<div class="sw" style="left:667.7px;background:#6c9fc9"></div>
<div class="t" style="left:693.96px;top:689.68px;font-size:15.5px;color:#222;transform:scaleX(1.0425)">ezgomarket</div>
<div class="sw" style="left:800.0px;background:#7baaf7"></div>
<div class="t" style="left:825.54px;top:689.68px;font-size:15.5px;color:#222;transform:scaleX(1.0578)">marketplace</div>
<div class="sw" style="left:936.1px;background:#f07b72"></div>
<div class="t" style="left:962.03px;top:689.68px;font-size:15.5px;color:#222;transform:scaleX(1.0694)">organic</div>
<div class="sw" style="left:1037.2px;background:#fcd04f"></div>
<div class="t" style="left:1063.34px;top:689.68px;font-size:15.5px;color:#222;transform:scaleX(1.0596)">referral</div>
<div class="sw" style="left:1135.9px;background:#71a97f;background-image:repeating-linear-gradient(45deg,rgba(255,255,255,.35) 0 1px,transparent 1px 3px)"></div>
<div class="t" style="left:1161.97px;top:689.68px;font-size:15.5px;color:#222;transform:scaleX(0.9258)">SEO</div>
<div class="sw" style="left:1213.3px;background:#ff7f3f;background-image:repeating-linear-gradient(45deg,rgba(255,255,255,.35) 0 1px,transparent 1px 3px)"></div>
<div class="t" style="left:1240.30px;top:689.68px;font-size:15.5px;color:#222;transform:scaleX(1.0286)">web</div>
<div class="sw" style="left:1290.8px;background:#7ecfd5"></div>
<div class="t" style="left:1317.70px;top:689.68px;font-size:15.5px;color:#222;transform:scaleX(1.0558)">website</div>
<div class="sw" style="left:1394.0px;background:#a1c2fa;background-image:radial-gradient(rgba(255,255,255,.55) 0.6px,transparent 0.9px);background-size:3px 3px"></div>
<div class="t" style="left:1419.93px;top:689.68px;font-size:15.5px;color:#222;transform:scaleX(1.0741)">zalo</div>
</body></html>
